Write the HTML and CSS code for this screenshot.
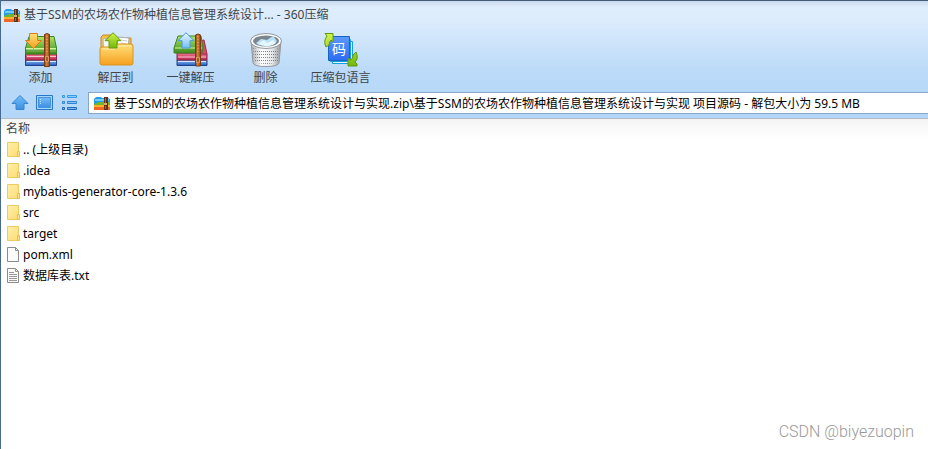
FILE: index.html
```html
<!DOCTYPE html>
<html lang="zh-CN">
<head>
<meta charset="utf-8">
<title>360压缩</title>
<link rel="stylesheet" href="styles.css">
</head>
<body>
<svg class="defs" aria-hidden="true">
  <defs>
    <linearGradient id="green" x2="0" y2="1"><stop offset="0" stop-color="#b4e26c"/><stop offset=".6" stop-color="#68b43a"/><stop offset="1" stop-color="#3f8a20"/></linearGradient>
    <linearGradient id="pink" x2="0" y2="1"><stop stop-color="#f1738c"/><stop offset="1" stop-color="#b52a53"/></linearGradient>
    <linearGradient id="blue" x2="0" y2="1"><stop stop-color="#8fc0fa"/><stop offset="1" stop-color="#2458bb"/></linearGradient>
    <linearGradient id="strap"><stop stop-color="#8a4216"/><stop offset=".45" stop-color="#d5853c"/><stop offset="1" stop-color="#8a4216"/></linearGradient>
    <linearGradient id="gold" x2="0" y2="1"><stop stop-color="#ffe07a"/><stop offset="1" stop-color="#f6a01f"/></linearGradient>
    <linearGradient id="lime" x2="0" y2="1"><stop stop-color="#d2f346"/><stop offset="1" stop-color="#74b80c"/></linearGradient>
    <linearGradient id="sky" x2="0" y2="1"><stop stop-color="#eaf8ff"/><stop offset="1" stop-color="#75bdf7"/></linearGradient>
    <linearGradient id="nav" x2="0" y2="1"><stop stop-color="#75bdf8"/><stop offset="1" stop-color="#3c8ee0"/></linearGradient>
    <linearGradient id="tile" x2="0" y2="1"><stop stop-color="#5d98fa"/><stop offset="1" stop-color="#2c6df3"/></linearGradient>
    <linearGradient id="metal"><stop stop-color="#a5a9ad"/><stop offset=".35" stop-color="#fff"/><stop offset=".7" stop-color="#e5e7e9"/><stop offset="1" stop-color="#92979b"/></linearGradient>
    <linearGradient id="folder" x2="1" y2="1"><stop stop-color="#fff0ad"/><stop offset="1" stop-color="#ffdc72"/></linearGradient>
    <pattern id="mesh" width="2" height="3" patternUnits="userSpaceOnUse"><path d="M1 1h1v1H1z" fill="#7d8389"/></pattern>
    <symbol id="books" viewBox="0 0 36 36">
      <path d="M2.500 28h31v5.500h-31z" fill="url(#blue)" stroke="#1d438d"/><path d="M4 29h29v1H4z" fill="#d6e8ff"/>
      <path d="M2.500 22h31v6h-31z" fill="url(#pink)" stroke="#912044"/><path d="M4 24h29v1H4z" fill="#ffc4cf"/>
      <path d="M6 4.500h25l2.500 11.500v6h-31v-6z" fill="url(#green)" stroke="#3c8321"/><path d="M3 16h30v1.500H3z" fill="#d4f49f"/><path d="M4 18h29v2H4z" fill="#68a644"/>
      <path d="M21.500 2.500q2.500-2 5 0v32h-5z" fill="url(#strap)" stroke="#7a3a14"/><path d="M24 4v18" stroke="#f4b16a" stroke-dasharray="1 2"/><path d="M22.500 24.500h3v5h-3z" fill="#a35c28" stroke="#e09b58"/>
    </symbol>
    <symbol id="archive" viewBox="0 0 16 14">
      <path d="M1 2l1-1h5l1 1h6l2 1v5H0V3z" fill="#279de8"/><path d="M1 3h14v2H1z" fill="#70cdf8"/>
      <path d="M0 8l5-2h11v4H0z" fill="#6fb52d"/><path d="M0 9h16v2H0z" fill="#ffb02a"/><path d="M0 11h16v3H0z" fill="#ee6a24"/>
      <path d="M10 1h4v13h-4z" fill="#5e2f1b"/><path d="M11 2h1v5h-1zM11 10h1v3h-1z" fill="#b0693c"/><path d="M10 7h3v2h-3z" fill="#e8a969"/>
    </symbol>
    <symbol id="dir" viewBox="0 0 14 17">
      <path d="M.5 1.500h11v14H.5z" fill="url(#folder)" stroke="#eecb61"/><path d="M10.500 10.500h2v5h-2z" fill="#ffe58b" stroke="#e5c04c"/>
    </symbol>
  </defs>
</svg>
<main class="window">
  <header class="chrome">
    <div class="titlebar">
      <svg class="app-icon" viewBox="0 0 16 14" aria-hidden="true"><use href="#archive"/></svg>
      <h1 class="title">基于SSM的农场农作物种植信息管理系统设计... - 360压缩</h1>
    </div>
    <nav class="toolbar">
      <button class="tool" type="button">
        <svg class="tool-icon" viewBox="0 0 36 36"><use href="#books"/><path d="M6.500 1.500h8v7h4l-8 8-8-8h4z" fill="url(#gold)" stroke="#d57f16"/></svg>
        <span>添加</span>
      </button>
      <button class="tool" type="button">
        <svg class="tool-icon" viewBox="0 0 36 36"><path d="M3 32V5l2-2h8l2 3h18v26z" fill="#f4bd49" stroke="#c98b23"/><path d="M5 7l14-2 1 18H6z" fill="#f6f8fa" stroke="#b4b8bd"/><path d="M20 5l11 1-2 20H18z" fill="#fff" stroke="#a9aeb4"/><path d="M23 8l6 1m-6 2 5 1" stroke="#c4cbd2"/><path d="M2 17q0-2 2-2h12l3-3h14q2 0 2 2v17q0 2-2 2H4q-2 0-2-2z" fill="url(#gold)" stroke="#dc9220"/><path d="M4 17h13l3-3h13" fill="none" stroke="#fff0ad"/><path d="M15 .7l8 8h-4V16h-8V8.700H7z" fill="url(#lime)" stroke="#629c12"/></svg>
        <span>解压到</span>
      </button>
      <button class="tool" type="button">
        <svg class="tool-icon" viewBox="0 0 36 36"><path d="M4 28h30v5.500H4z" fill="url(#blue)" stroke="#1d438d"/><path d="M5 29h28v1H5z" fill="#d6e8ff"/><path d="M4 21h28l2 1v6H4z" fill="url(#pink)" stroke="#912044"/><path d="M26 9l5-1 3 14h-7z" fill="#d94c69" stroke="#9c2a48"/><path d="M5 25h28" stroke="#ffc4cf"/><path d="M5 4h23l2 12-1 5H1v-5z" fill="url(#green)" stroke="#3c8321"/><path d="M2 16h27" stroke="#d4f49f"/><path d="M22.500 3q2.500-2 5 0v31h-5z" fill="url(#strap)" stroke="#7a3a14"/><path d="M25 4v18" stroke="#f4b16a" stroke-dasharray="1 2"/><path d="M23.500 25.500h3v5h-3z" fill="#a35c28" stroke="#e09b58"/><path d="M13 .7l8 8h-4V16H9V8.700H5z" fill="url(#sky)" stroke="#4b98da"/></svg>
        <span>一键解压</span>
      </button>
      <button class="tool" type="button">
        <svg class="tool-icon" viewBox="0 0 36 36"><path d="M3 9l2 22q1 3.500 13 3.500T31 31l2-22z" fill="url(#metal)" stroke="#92979c"/><path d="M5 16q13 5 26 0l-1 14q-12 4-24 0z" fill="url(#mesh)"/><ellipse cx="18" cy="9" rx="15.500" ry="7.500" fill="#fafbfc" stroke="#92989e"/><ellipse cx="18" cy="9" rx="13" ry="5.500" fill="#7a858e"/><path d="M8 11l5-4 6 1 6-4 4 5q-3 5-11 5-7 0-10-3z" fill="#b9e0f7"/><path d="M10 12l6-4 3 3 6-3 3 3q-5 4-11 3z" fill="#e5f6ff"/></svg>
        <span>删除</span>
      </button>
      <button class="tool" type="button">
        <svg class="tool-icon" viewBox="0 0 36 36"><path d="M9.500 9.500h20v22h-20z" fill="#e4faff" stroke="#159fe0"/><path d="M7.500 7.500h20v22h-20z" fill="#bdedff" stroke="#159fe0"/><path d="M5.500 4.500h21v24h-21z" fill="url(#tile)" stroke="#1764c9"/><path d="M2 1.500h8v8L8 8q-2 2-2 5l-3 2q-3-6 1-11zM33 20q3 7-1 10l2 2v2h-9v-8l3 2q2-2 2-5z" fill="url(#lime)" stroke="#609713"/><text class="tile-text" x="16" y="22" text-anchor="middle">码</text></svg>
        <span>压缩包语言</span>
      </button>
    </nav>
    <div class="location">
      <button class="nav-button" type="button" aria-label="向上"><svg viewBox="0 0 18 18"><path d="M9 1.500l8 8h-4v6H5v-6H1z" fill="url(#nav)" stroke="#3386d3"/></svg></button>
      <button class="nav-button" type="button" aria-label="图标视图"><svg viewBox="0 0 18 18"><path d="M.5 1.500h16v14H.5z" fill="#a7d6fc" stroke="#2977c5"/><path d="M2.500 3.500h12v10h-12z" fill="url(#nav)" stroke="#4795df"/><path d="M4.500 5v5" stroke="#c5e6ff" stroke-dasharray="1 1"/></svg></button>
      <button class="nav-button" type="button" aria-label="列表视图"><svg viewBox="0 0 18 18"><path d="M1.500 1.500h2v2h-2zM6.500 1.500h9v2h-9z" fill="#8dccff" stroke="#3699ea"/><path d="M1.500 7.500h2v2h-2zM6.500 7.500h9v2h-9z" fill="#82c2fa" stroke="#3283d2"/><path d="M1.500 13.500h2v2h-2zM6.500 13.500h9v2h-9z" fill="#75b6f3" stroke="#2469b5"/></svg></button>
      <label class="address">
        <svg class="app-icon" viewBox="0 0 16 14" aria-hidden="true"><use href="#archive"/></svg>
        <input class="path" type="text" aria-label="路径" value="基于SSM的农场农作物种植信息管理系统设计与实现.zip\基于SSM的农场农作物种植信息管理系统设计与实现 项目源码 - 解包大小为 59.5 MB">
      </label>
    </div>
  </header>
  <section class="content">
    <table class="files">
      <thead><tr><th scope="col">名称</th></tr></thead>
      <tbody>
        <tr><td><div class="file"><svg class="file-icon"><use href="#dir"/></svg>.. (上级目录)</div></td></tr>
        <tr><td><div class="file"><svg class="file-icon"><use href="#dir"/></svg>.idea</div></td></tr>
        <tr><td><div class="file"><svg class="file-icon"><use href="#dir"/></svg>mybatis-generator-core-1.3.6</div></td></tr>
        <tr><td><div class="file"><svg class="file-icon"><use href="#dir"/></svg>src</div></td></tr>
        <tr><td><div class="file"><svg class="file-icon"><use href="#dir"/></svg>target</div></td></tr>
        <tr><td><div class="file"><svg class="file-icon" viewBox="0 0 14 17"><path d="M.5 1.500h8l3 3v11H.5z" fill="#fbfbfb" stroke="#8b8b8b"/><path d="M8.500 1.500v3h3" fill="none" stroke="#8b8b8b"/></svg>pom.xml</div></td></tr>
        <tr><td><div class="file"><svg class="file-icon" viewBox="0 0 14 17"><path d="M.5 1.500h8l3 3v11H.5z" fill="#fbfbfb" stroke="#8b8b8b"/><path d="M8.500 1.500v3h3M2 5.500h5M2 7.500h8M2 9.500h8M2 11.500h8M2 13.500h8" fill="none" stroke="#999"/></svg>数据库表.txt</div></td></tr>
      </tbody>
    </table>
    <p class="watermark">CSDN @biyezuopin</p>
  </section>
</main>
</body>
</html>
```
FILE: styles.css
```css
* { box-sizing: border-box; }
body { margin: 0; color: #000; font: 12px/16px "Noto Sans", "Noto Sans CJK SC", sans-serif; }
button, input { font: inherit; color: inherit; }
button { border: 0; padding: 0; background: none; }
svg { display: block; flex: none; }
.defs { position: absolute; width: 0; height: 0; }
.window { min-height: 100vh; display: flex; flex-direction: column; border-left: 1px solid #486a8e; background: #fff; }
.chrome { border-top: 1px solid #485c78; border-bottom: 1px solid #b6bbc1; padding-bottom: 4px; background: linear-gradient(#c9d9ed 0, #dfedfc 6px, #dcecfc 20px, #bbdaf8 70px, #b3d6f8 100%); }
.titlebar { display: flex; align-items: center; gap: 4px; height: 27px; padding-left: 3px; color: #41464c; }
.title { margin: 0; font: 12px/16px "Noto Sans", "Noto Sans CJK SC", sans-serif; }
.app-icon { width: 16px; height: 14px; }
.toolbar { display: flex; height: 64px; padding: 4px 0 0 2px; color: #3f454b; }
.tool { display: flex; flex-direction: column; align-items: center; gap: 2px; width: 75px; white-space: nowrap; }
.tool-icon { width: 36px; height: 36px; }
.tile-text { font: 14px "Noto Sans CJK SC", sans-serif; fill: #fff; }
.location { display: flex; align-items: center; padding-left: 10px; }
.nav-button { width: 25px; height: 22px; }
.nav-button svg { width: 18px; height: 18px; }
.address { display: flex; align-items: center; gap: 4px; flex: 1; height: 22px; margin-left: 2px; padding-left: 5px; border: 1px solid #87a6c8; border-right: 0; background: #fff; }
.path { flex: 1; min-width: 0; height: 20px; padding: 0; border: 0; outline: 0; background: transparent; }
.content { flex: 1; display: flex; flex-direction: column; background: linear-gradient(#f4f4f4, #fff 20px); }
.files { width: 100%; border-collapse: collapse; }
.files th { height: 20px; padding: 0 5px; color: #444; font-weight: 400; text-align: left; }
.files td { height: 21px; padding: 0 6px; }
.file { display: flex; align-items: center; gap: 2px; }
.file-icon { width: 14px; height: 17px; }
.watermark { margin: auto 14px 6px auto; color: #999; font: 300 16px/22px Roboto, sans-serif; }
```
